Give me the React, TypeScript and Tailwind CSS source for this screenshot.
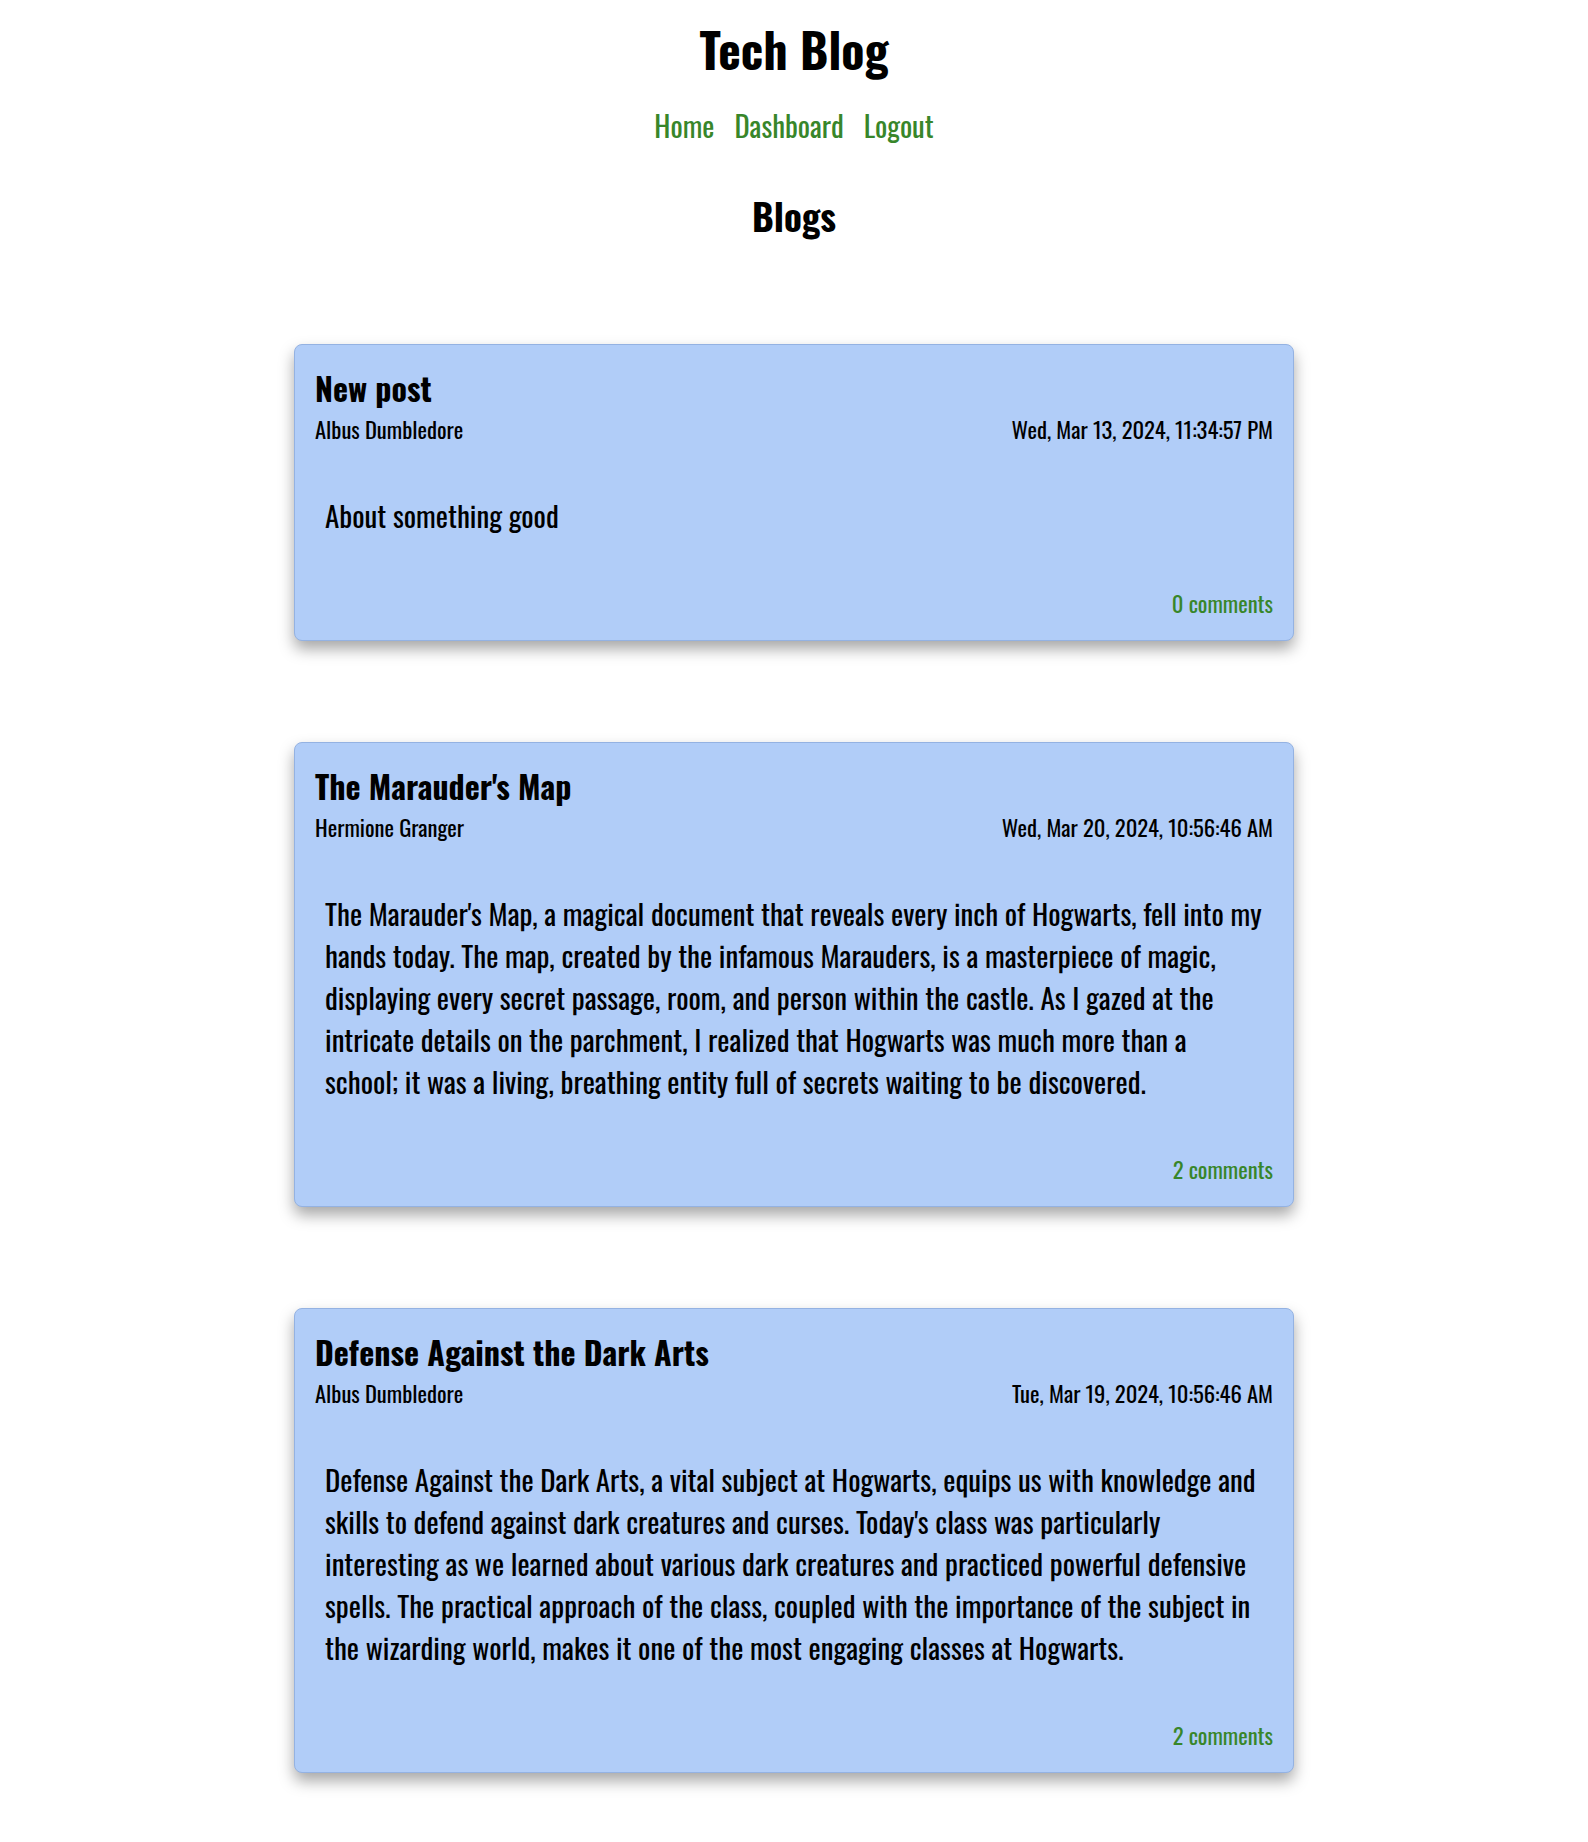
interface Post {
  id: number;
  title: string;
  author: string;
  date: string;
  body: string;
  comments: number;
}

const posts: Post[] = [
  {
    id: 1,
    title: 'New post',
    author: 'Albus Dumbledore',
    date: 'Wed, Mar 13, 2024, 11:34:57 PM',
    body: 'About something good',
    comments: 0,
  },
  {
    id: 2,
    title: "The Marauder's Map",
    author: 'Hermione Granger',
    date: 'Wed, Mar 20, 2024, 10:56:46 AM',
    body: "The Marauder's Map, a magical document that reveals every inch of Hogwarts, fell into my hands today. The map, created by the infamous Marauders, is a masterpiece of magic, displaying every secret passage, room, and person within the castle. As I gazed at the intricate details on the parchment, I realized that Hogwarts was much more than a school; it was a living, breathing entity full of secrets waiting to be discovered.",
    comments: 2,
  },
  {
    id: 3,
    title: 'Defense Against the Dark Arts',
    author: 'Albus Dumbledore',
    date: 'Tue, Mar 19, 2024, 10:56:46 AM',
    body: "Defense Against the Dark Arts, a vital subject at Hogwarts, equips us with knowledge and skills to defend against dark creatures and curses. Today's class was particularly interesting as we learned about various dark creatures and practiced powerful defensive spells. The practical approach of the class, coupled with the importance of the subject in the wizarding world, makes it one of the most engaging classes at Hogwarts.",
    comments: 2,
  },
];

function PostCard({ post }: { post: Post }) {
  return (
    <article className="w-[1000px] mx-auto rounded-lg border border-[#94b2e2] bg-[#b1cdf8] px-[20px] pt-[23px] pb-[23px] shadow-[0_8px_15px_rgba(0,0,0,0.35)]">
      <h2 className="text-[32px] leading-[40px] font-bold">{post.title}</h2>
      <div className="mt-[7px] flex justify-between text-[22.6px] leading-[28px]">
        <span>{post.author}</span>
        <span>{post.date}</span>
      </div>
      <p className="mt-[51px] px-[10px] text-[29px] leading-[42px]">{post.body}</p>
      <div className="mt-[53px] flex justify-end text-[22.6px] leading-[28px]">
        <a href="#" className="text-[#38862a]">
          {post.comments} comments
        </a>
      </div>
    </article>
  );
}

export default function App() {
  return (
    <div className="min-h-screen bg-white pb-16 text-black font-['Oswald','Roboto_Condensed',sans-serif]">
      {/* header */}
      <header className="flex flex-col items-center pt-[21px]">
        <h1 className="text-[48px] leading-[56px] font-bold">Tech Blog</h1>
        <nav className="mt-[30px] flex gap-[20px] text-[28.8px] leading-[36px] text-[#38862a]">
          <a href="#">Home</a>
          <a href="#">Dashboard</a>
          <a href="#">Logout</a>
        </nav>
        <h2 className="mt-[51px] text-[37px] leading-[44px] font-bold">Blogs</h2>
      </header>

      {/* posts */}
      <main className="mt-[106px] flex flex-col gap-[101px]">
        {posts.map((post) => (
          <PostCard key={post.id} post={post} />
        ))}
      </main>
    </div>
  );
}
